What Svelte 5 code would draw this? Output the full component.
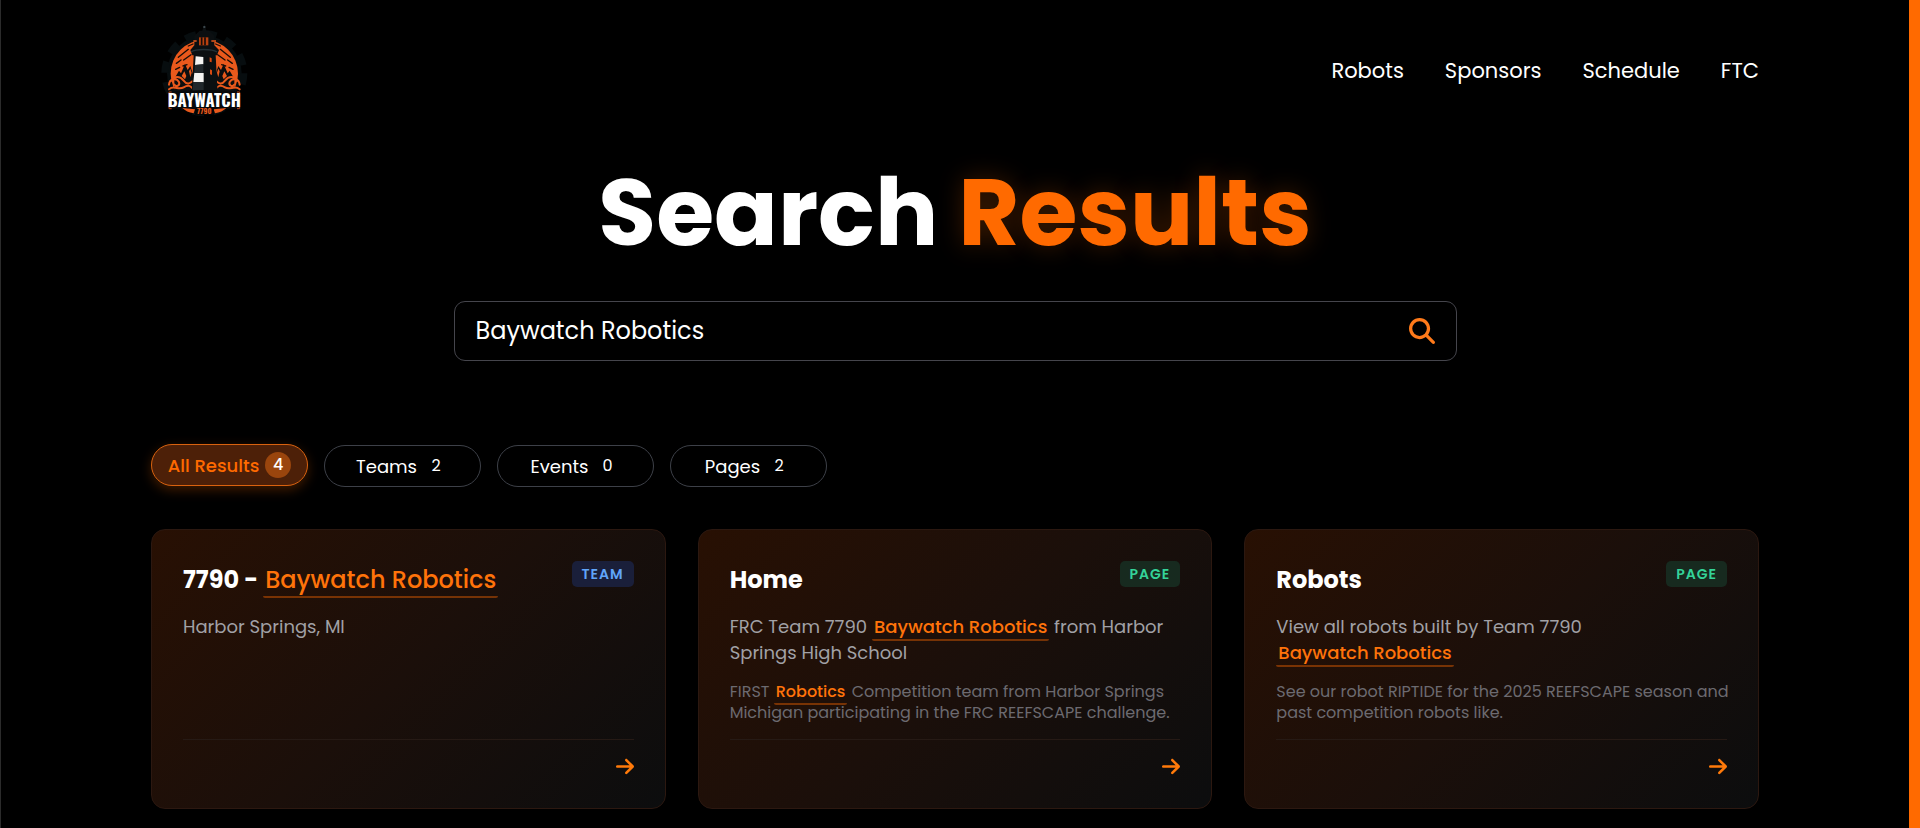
<script lang="ts">
  type Part = { text: string; mark?: boolean };
  type Result = {
    kind: 'team' | 'page';
    href: string;
    title: Part[];
    description: Part[];
    content?: Part[];
  };

  const links = ['Robots', 'Sponsors', 'Schedule', 'FTC'];

  const tabs = [
    { id: 'all', label: 'All Results', count: 4 },
    { id: 'team', label: 'Teams', count: 2 },
    { id: 'event', label: 'Events', count: 0 },
    { id: 'page', label: 'Pages', count: 2 },
  ];

  const results: Result[] = [
    {
      kind: 'team',
      href: '#team-7790',
      title: [{ text: '7790 - ' }, { text: 'Baywatch Robotics', mark: true }],
      description: [{ text: 'Harbor Springs, MI' }],
    },
    {
      kind: 'page',
      href: '#home',
      title: [{ text: 'Home' }],
      description: [
        { text: 'FRC Team 7790 ' },
        { text: 'Baywatch Robotics', mark: true },
        { text: ' from Harbor Springs High School' },
      ],
      content: [
        { text: 'FIRST ' },
        { text: 'Robotics', mark: true },
        { text: ' Competition team from Harbor Springs Michigan participating in the FRC REEFSCAPE challenge.' },
      ],
    },
    {
      kind: 'page',
      href: '#robots',
      title: [{ text: 'Robots' }],
      description: [{ text: 'View all robots built by Team 7790 ' }, { text: 'Baywatch Robotics', mark: true }],
      content: [{ text: 'See our robot RIPTIDE for the 2025 REEFSCAPE season and past competition robots like.' }],
    },
  ];

  let query = $state('Baywatch Robotics');
  let activeTab = $state('all');

  let visible = $derived(activeTab === 'all' ? results : results.filter((r) => r.kind === activeTab));
</script>

{#snippet rich(parts: Part[])}
  {#each parts as part}{#if part.mark}<mark>{part.text}</mark>{:else}{part.text}{/if}{/each}
{/snippet}

<div class="layout">
  <header>
    <a class="logo" href="#top" aria-label="Baywatch 7790">
      <svg viewBox="30 0 330 360" width="110" height="120">
        <!-- gear -->
        <circle cx="190" cy="190" r="112" fill="#070d0f" />
        <circle cx="190" cy="190" r="118" fill="none" stroke="#070d0f" stroke-width="22" stroke-dasharray="34 28" />
        <!-- sky -->
        <circle cx="190" cy="191" r="101" fill="#e9591c" />
        <g fill="none" stroke="#180d08" stroke-width="4" stroke-linecap="round">
          <path d="M112 142l30-24M106 160l14-10M128 150l22-16M104 178l12-6M126 168l12-4M142 108l14-6" />
          <path d="M268 142l-30-24M274 160l-14-10M252 150l-22-16M276 178l-12-6M254 168l-12-4M238 108l-14-6" />
        </g>
        <!-- rocks and trees -->
        <path d="M100 206l14-24 6 8 12-28 8 18 8-12 8 24v66h-56zM280 206l-14-24-6 8-12-28-8 18-8-12-8 24v66h56z" fill="#0d0e0f" />
        <g fill="#e9591c">
          <path d="M122 198l8-14 6 14-4 10zM144 184l4-8 4 12-4 14zM258 198l-8-14-6 14 4 10zM236 184l-4-8-4 12 4 14z" />
        </g>
        <!-- waves -->
        <g fill="none" stroke="#e9591c" stroke-width="6" stroke-linecap="round">
          <path d="M84 224c2-18 22-22 30-8 4 10-8 16-14 8M84 238c16-14 28 4 44-6s22-2 28 4M92 212c8-14 24-16 36 0s20 6 26 2" />
          <path d="M296 224c-2-18-22-22-30-8-4 10 8 16 14 8M296 238c-16-14-28 4-44-6s-22-2-28 4M288 212c-8-14-24-16-36 0s-20 6-26 2" />
        </g>
        <!-- lighthouse -->
        <path d="M148 120l12-14V78l16-16h8l6-20 6 20h8l16 16v28l14 14-6 16h-4l6 116h-78l6-116h-4z" fill="#0b0f11" />
        <path d="M174 82h28v24h-28z" fill="#b8400f" />
        <path d="M182 82v24M192 82v24" stroke="#160d0a" stroke-width="5" />
        <path d="M157 93h10M211 93h14" stroke="#e9591c" stroke-width="4" />
        <path d="M150 126c14-10 62-10 78 0" fill="none" stroke="#243036" stroke-width="4" />
        <path d="M164 139l23 2v22l-25 2zM160 188l28 1v28l-31-1z" fill="#f4f4f2" />
        <path d="M162 165l25-2v26l-27-1zM157 216l31 1v29h-34z" fill="#20272b" />
        <path d="M206 142l6 3v12l-6-2zM207 178l6 3v14l-6-2z" fill="#d84a12" />
        <path d="M187 48h6v6h-6z" fill="#3b464b" />
        <!-- banner -->
        <path d="M82 250l18-6 90-4 90 4 18 6v46H82z" fill="#07090a" />
        <path d="M92 246h-8v50h8M288 246h8v50h-8" fill="none" stroke="#b94616" stroke-width="3" />
        <text class="wordmark" x="190" y="291">BAYWATCH</text>
        <path d="M124 294l38 4-4 12c-14-2-26-8-34-16zM256 294l-38 4 4 12c14-2 26-8 34-16z" fill="#e9591c" />
        <path d="M162 295h56v20h-56z" fill="#050505" />
        <text class="number" x="190" y="312">7790</text>
      </svg>
    </a>
    <nav>
      {#each links as link}
        <a href="#{link.toLowerCase()}">{link}</a>
      {/each}
    </nav>
  </header>

  <main>
    <h1>Search <span>Results</span></h1>

    <form class="search" onsubmit={(e) => e.preventDefault()}>
      <input type="text" aria-label="Search" bind:value={query} />
      <button type="submit" aria-label="Submit search">
        <svg viewBox="0 0 512 512" width="26" height="26" fill="currentColor">
          <path d="M416 208c0 45.900-14.900 88.300-40 122.700L502.600 457.400c12.500 12.500 12.500 32.800 0 45.300s-32.800 12.500-45.300 0L330.700 376c-34.400 25.200-76.800 40-122.700 40C93.100 416 0 322.900 0 208S93.100 0 208 0S416 93.100 416 208zM208 352a144 144 0 1 0 0-288 144 144 0 1 0 0 288z" />
        </svg>
      </button>
    </form>

    <div class="tabs">
      {#each tabs as tab}
        <button type="button" class:active={activeTab === tab.id} onclick={() => (activeTab = tab.id)}>
          {tab.label}
          <span class="count">{tab.count}</span>
        </button>
      {/each}
    </div>

    <div class="results">
      {#each visible as result}
        <a class="card" href={result.href}>
          <div class="card-head">
            <h2>{@render rich(result.title)}</h2>
            <span class="badge badge-{result.kind}">{result.kind}</span>
          </div>
          <p class="description">{@render rich(result.description)}</p>
          {#if result.content}
            <p class="content">{@render rich(result.content)}</p>
          {/if}
          <div class="card-foot">
            <svg viewBox="0 0 448 512" width="18" height="21" fill="currentColor" aria-hidden="true">
              <path d="M438.600 278.600c12.500-12.500 12.500-32.800 0-45.300l-160-160c-12.500-12.500-32.800-12.500-45.300 0s-12.500 32.800 0 45.300L338.800 224 32 224c-17.700 0-32 14.300-32 32s14.300 32 32 32l306.700 0L233.400 393.300c-12.500 12.500-12.500 32.800 0 45.300s32.800 12.500 45.300 0l160-160z" />
            </svg>
          </div>
        </a>
      {/each}
    </div>
  </main>
</div>

<style>
  :global(body) {
    margin: 0;
    background: #000;
  }

  .layout {
    box-sizing: border-box;
    min-height: 100vh;
    padding: 10px 150px 19px;
    border-left: 1px solid #2b2b2b;
    border-right: 11px solid #ff6a00;
    background: #000;
    color: #fff;
    font-family: Poppins, Inter, sans-serif;
  }

  a {
    color: inherit;
    text-decoration: none;
  }

  button,
  input {
    font-family: inherit;
    color: inherit;
  }

  svg {
    display: block;
  }

  header {
    display: flex;
    align-items: center;
    justify-content: space-between;
  }

  .wordmark,
  .number {
    font-family: Oswald, 'Roboto Condensed', 'Liberation Sans Narrow', sans-serif;
    font-weight: 700;
    text-anchor: middle;
  }

  .wordmark {
    font-size: 50px;
    fill: #fff;
  }

  .number {
    font-size: 22px;
    fill: #e9591c;
  }

  nav {
    display: flex;
    gap: 41px;
    padding-top: 2px;
    font-size: 21px;
    line-height: 32px;
  }

  h1 {
    margin: 34px 0 0;
    font-size: 94px;
    line-height: 96px;
    font-weight: 700;
    text-align: center;
  }

  h1 span {
    color: #ff6a00;
    text-shadow: 0 0 24px rgba(255, 106, 0, 0.25);
  }

  .search {
    display: flex;
    align-items: center;
    box-sizing: border-box;
    max-width: 1003px;
    height: 60px;
    margin: 41px auto 0;
    padding: 0 21px;
    border: 1px solid #45454c;
    border-radius: 11px;
  }

  .search input {
    flex: 1;
    min-width: 0;
    padding: 0;
    border: none;
    outline: none;
    background: none;
    font-size: 24px;
    line-height: 36px;
  }

  .search button {
    padding: 0;
    border: none;
    background: none;
    color: #ff7a1a;
    cursor: pointer;
  }

  .tabs {
    display: flex;
    flex-wrap: wrap;
    gap: 16px;
    margin-top: 84px;
  }

  .tabs button {
    display: flex;
    align-items: center;
    justify-content: center;
    gap: 6px;
    box-sizing: border-box;
    min-width: 157px;
    height: 42px;
    padding: 0 15px;
    border: 1px solid #3d4048;
    border-radius: 21px;
    background: #000;
    font-size: 18px;
    cursor: pointer;
  }

  .tabs button.active {
    border-color: #d9620f;
    background: #4d2008;
    color: #ff6a00;
    font-weight: 500;
    box-shadow: 0 4px 12px rgba(255, 106, 0, 0.25);
    transform: translateY(-1px);
  }

  .count {
    width: 26px;
    border-radius: 13px;
    font-size: 16px;
    line-height: 26px;
    text-align: center;
  }

  .active .count {
    background: #9a450d;
    color: #fff;
  }

  .results {
    display: grid;
    grid-template-columns: repeat(auto-fill, minmax(400px, 1fr));
    gap: 32px;
    margin-top: 42px;
  }

  .card {
    display: flex;
    flex-direction: column;
    box-sizing: border-box;
    min-height: 280px;
    padding: 31px;
    border: 1px solid #2c1810;
    border-radius: 14px;
    background: linear-gradient(135deg, #281003, #1b0f0a 50%, #0c0d0e);
  }

  .card-head {
    display: flex;
    align-items: flex-start;
    justify-content: space-between;
    gap: 16px;
  }

  h2 {
    margin: 0;
    font-size: 24px;
    line-height: 38px;
    font-weight: 700;
  }

  mark {
    padding: 0 2px;
    border-bottom: 2px solid rgba(255, 106, 0, 0.4);
    border-radius: 2px;
    background: none;
    color: #ff730a;
    font-weight: 500;
    white-space: nowrap;
  }

  .badge {
    padding: 0 10px;
    border-radius: 5px;
    font-size: 14px;
    line-height: 26px;
    font-weight: 600;
    letter-spacing: 1px;
    text-transform: uppercase;
  }

  .badge-team {
    background: #1a1f3a;
    color: #60a5fa;
  }

  .badge-page {
    background: #172a1f;
    color: #34d399;
  }

  p {
    margin: 0;
  }

  .description {
    margin-top: 15px;
    color: #a1a1a6;
    font-size: 18px;
    line-height: 26px;
  }

  /* runs slightly into the card padding */
  .content {
    margin: 15px -8px 0 0;
    color: #6c6a70;
    font-size: 16px;
    line-height: 21px;
  }

  .card-foot {
    display: flex;
    justify-content: flex-end;
    margin-top: auto;
    padding-top: 16px;
    border-top: 1px solid #261a15;
    color: #ff7a0a;
  }
</style>
